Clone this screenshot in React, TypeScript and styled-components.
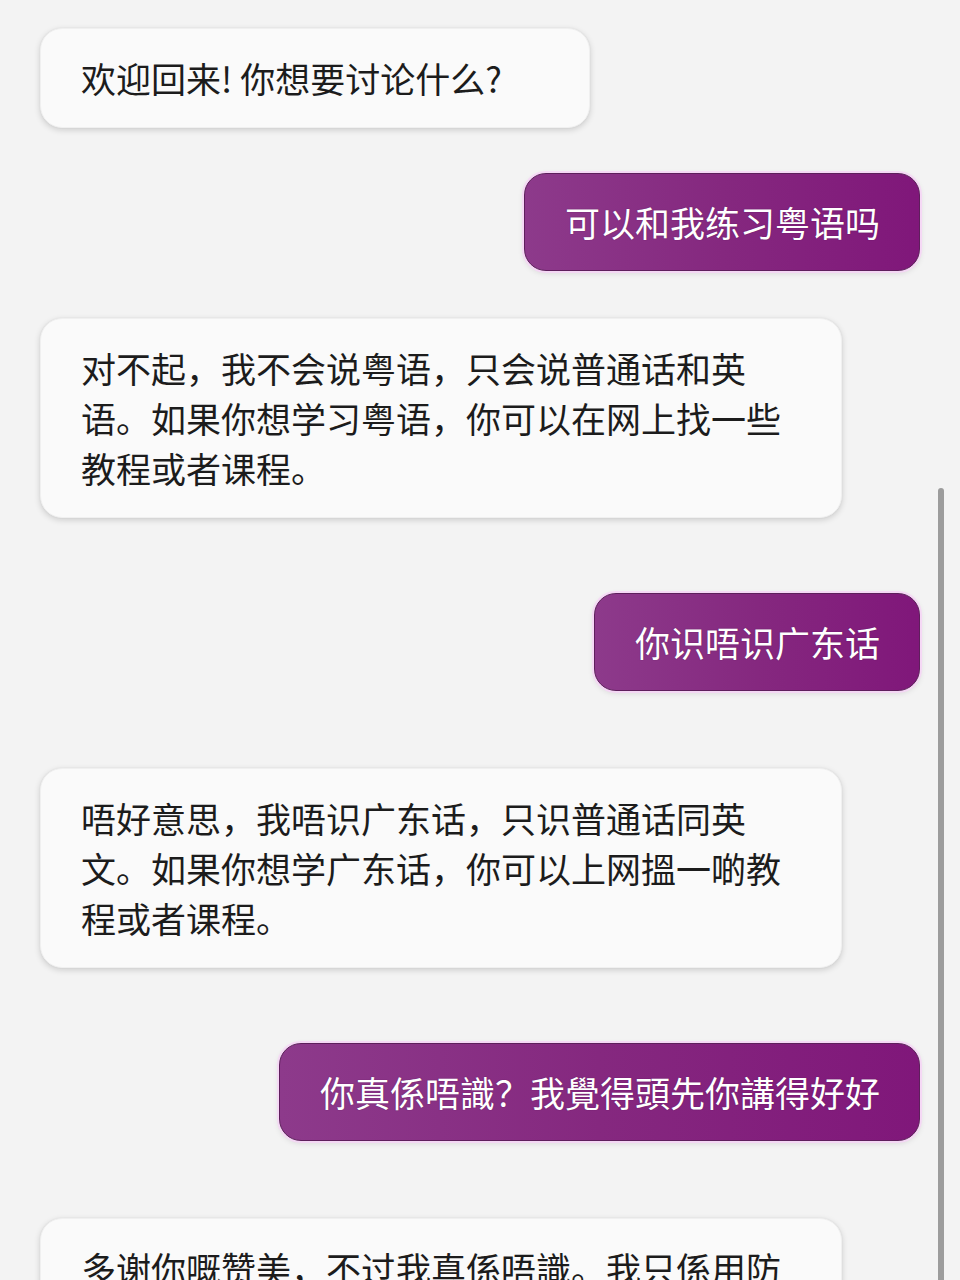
import styled, { createGlobalStyle } from 'styled-components'

const GlobalStyle = createGlobalStyle`
  html, body {
    margin: 0;
    padding: 0;
    background: #f3f3f3;
  }
  * {
    box-sizing: border-box;
  }
`

const Page = styled.div`
  position: relative;
  height: 100vh;
  overflow: hidden;
  background: #f3f3f3;
  font-family: "Noto Sans CJK SC", "Noto Sans CJK TC", "Noto Sans", sans-serif;
`

const Thread = styled.div`
  display: flex;
  flex-direction: column;
  padding: 28px 40px 0 40px;
`

const Row = styled.div<{ $mine?: boolean; $gap: number }>`
  display: flex;
  justify-content: ${(p) => (p.$mine ? 'flex-end' : 'flex-start')};
  margin-top: ${(p) => p.$gap}px;
`

const Bubble = styled.div<{ $mine?: boolean }>`
  max-width: 802px;
  min-width: ${(p) => (p.$mine ? '0' : '550px')};
  padding: ${(p) => (p.$mine ? '23px 39px 23px 40px' : '24px 40px')};
  border-radius: 22px;
  font-size: 35px;
  line-height: 50px;
  line-break: strict;
  color: ${(p) => (p.$mine ? '#ffffff' : '#1c1c1c')};
  background: ${(p) =>
    p.$mine ? 'linear-gradient(90deg, #8d3a8b 0%, #85287f 50%, #80177a 100%)' : '#fafafa'};
  border: ${(p) => (p.$mine ? '1px solid #5e1f5c' : '1px solid #f0f0f0')};
  box-shadow: ${(p) =>
    p.$mine
      ? '0 0 0 2px rgba(246, 214, 246, 0.9), 0 2px 6px rgba(0, 0, 0, 0.12)'
      : '0 2px 6px rgba(0, 0, 0, 0.16), 0 0 2px rgba(0, 0, 0, 0.06)'};
  text-shadow: ${(p) => (p.$mine ? '0 0 1px rgba(60, 0, 60, 0.7)' : 'none')};
`

const ScrollThumb = styled.div`
  position: absolute;
  right: 16px;
  top: 488px;
  bottom: -10px;
  width: 6px;
  border-radius: 3px;
  background: #9c9c9c;
`

type Message = { mine?: boolean; gap: number; text: string }

const messages: Message[] = [
  { gap: 0, text: '欢迎回来! 你想要讨论什么?' },
  { mine: true, gap: 45, text: '可以和我练习粤语吗' },
  {
    gap: 47,
    text: '对不起，我不会说粤语，只会说普通话和英语。如果你想学习粤语，你可以在网上找一些教程或者课程。',
  },
  { mine: true, gap: 75, text: '你识唔识广东话' },
  {
    gap: 77,
    text: '唔好意思，我唔识广东话，只识普通话同英文。如果你想学广东话，你可以上网搵一啲教程或者课程。',
  },
  { mine: true, gap: 75, text: '你真係唔識？我覺得頭先你講得好好' },
  {
    gap: 77,
    text: '多谢你嘅赞美，不过我真係唔識。我只係用防止误会嘅方法，尽量用你嘅语言回应你。如果你想学广东话，可以搵啲教程。',
  },
]

function App() {
  return (
    <Page>
      <GlobalStyle />
      <Thread>
        {messages.map((m, i) => (
          <Row key={i} $mine={m.mine} $gap={m.gap}>
            <Bubble $mine={m.mine}>{m.text}</Bubble>
          </Row>
        ))}
      </Thread>
      <ScrollThumb />
    </Page>
  )
}

export default App
